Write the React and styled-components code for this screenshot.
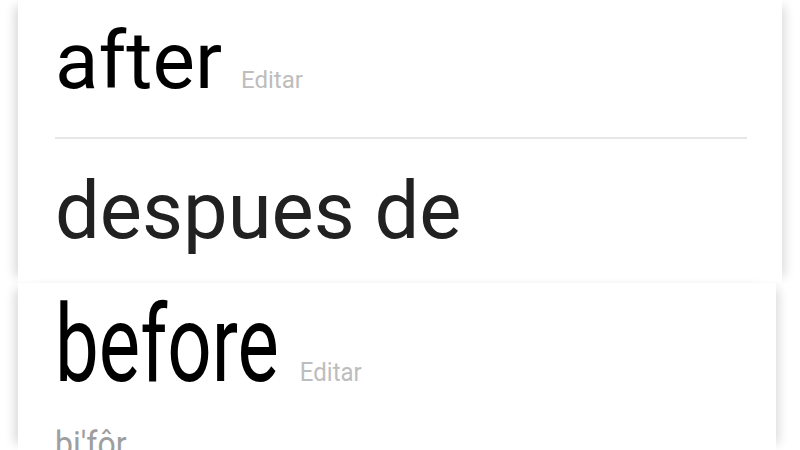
import React from "react";
import styled, { createGlobalStyle } from "styled-components";

const Global = createGlobalStyle`
  html, body { margin: 0; padding: 0; background: #ffffff; }
  body { font-family: Roboto, "Noto Sans", Arial, sans-serif; }
`;

const Page = styled.div`
  width: 800px;
  height: 450px;
  overflow: hidden;
  background: #ffffff;
  display: flex;
  flex-direction: column;
`;

const Card = styled.section`
  position: relative;
  margin-left: 18px;
  width: ${(p) => p.$width}px;
  height: ${(p) => p.$height}px;
  flex-shrink: 0;
  background: #ffffff;
  box-sizing: border-box;
  padding: ${(p) => p.$padTop}px 0 0 37px;
  box-shadow: -9px 0 10px -6px rgba(0, 0, 0, 0.16),
    9px 0 10px -6px rgba(0, 0, 0, 0.14);
  display: flex;
  flex-direction: column;
`;

const HeadRow = styled.div`
  display: flex;
  align-items: baseline;
  gap: ${(p) => p.$gap}px;
  height: 80px;
`;

const Word = styled.span`
  display: inline-block;
  font-family: Roboto, sans-serif;
  font-size: ${(p) => p.$size || 80}px;
  line-height: 80px;
  color: ${(p) => p.$color || "#000"};
  transform: ${(p) => (p.$stretch ? `scaleY(${p.$stretch})` : "none")};
  transform-origin: 0 67px;
`;

const Edit = styled.span`
  display: inline-block;
  font-family: Roboto, sans-serif;
  font-size: 24px;
  line-height: 24px;
  color: #bdbdbd;
  transform: ${(p) => (p.$stretch ? `scaleY(${p.$stretch})` : "none")};
  transform-origin: 0 20px;
`;

const Divider = styled.hr`
  margin: 36px 35px 0 0;
  border: 0;
  height: 2px;
  background: #e6e6e6;
`;

const Translation = styled.div`
  margin-top: 32px;
  font-family: Roboto, sans-serif;
  font-size: 79.5px;
  line-height: 80px;
  color: #212121;
`;

const Phonetic = styled.div`
  margin-top: 34px;
  font-family: Roboto, sans-serif;
  font-size: 32px;
  line-height: 32px;
  color: #9e9e9e;
  transform: scaleY(1.1);
  transform-origin: 0 27px;
`;

export default function App() {
  return (
    <>
      <Global />
      <Page>
        <Card $width={764} $height={283} $padTop={21}>
          <HeadRow $gap={19}>
            <Word>after</Word>
            <Edit>Editar</Edit>
          </HeadRow>
          <Divider />
          <Translation>despues de</Translation>
        </Card>
        <Card $width={758} $height={167} $padTop={32}>
          <HeadRow $gap={21}>
            <Word $size={78} $stretch={1.37}>before</Word>
            <Edit $stretch={1.1}>Editar</Edit>
          </HeadRow>
          <Phonetic>bi'fôr</Phonetic>
        </Card>
      </Page>
    </>
  );
}
